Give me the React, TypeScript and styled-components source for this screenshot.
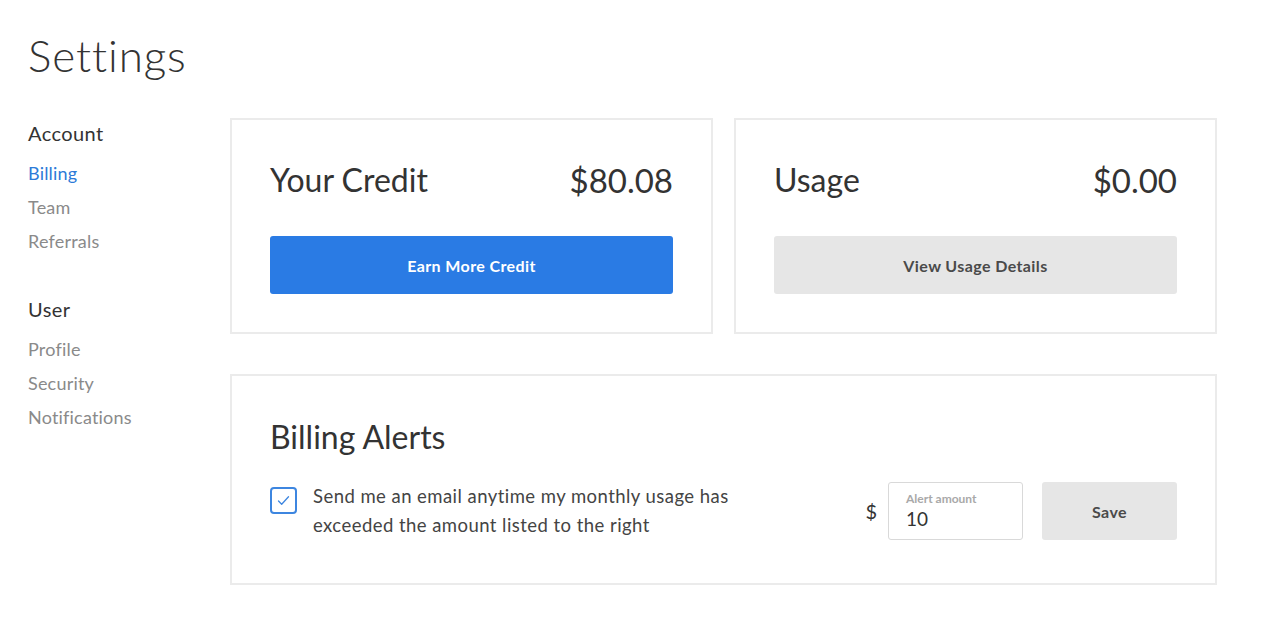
import React, { useState } from 'react';
import styled, { createGlobalStyle } from 'styled-components';

const GlobalStyle = createGlobalStyle`
  body {
    margin: 0;
    background: #fff;
    font-family: Lato, "Open Sans", Arial, sans-serif;
    color: #333;
  }
  * { box-sizing: border-box; }
`;

const Page = styled.div`
  padding: 30px 28px;
`;

const PageTitle = styled.h1`
  margin: 0 0 38px;
  font-size: 44px;
  line-height: 50px;
  font-weight: 300;
  letter-spacing: 0.9px;
  color: #333;
`;

const Layout = styled.div`
  display: grid;
  grid-template-columns: 202px 987px;
`;

const Sidebar = styled.nav`
  display: flex;
  flex-direction: column;
`;

const NavGroup = styled.div`
  display: flex;
  flex-direction: column;
  margin-bottom: 36px;
`;

const NavHeading = styled.div`
  font-size: 20px;
  line-height: 30px;
  letter-spacing: 0.4px;
  color: #333;
  margin-bottom: 8px;
`;

const NavItem = styled.a<{ $active?: boolean }>`
  font-size: 18px;
  line-height: 34px;
  letter-spacing: 0.2px;
  color: ${({ $active }) => ($active ? '#2d7bd8' : '#8a8a8a')};
  text-decoration: none;
  cursor: pointer;
`;

const Main = styled.main`
  display: flex;
  flex-direction: column;
  gap: 40px;
`;

const CardRow = styled.div`
  display: grid;
  grid-template-columns: 1fr 1fr;
  gap: 21px;
`;

const Card = styled.section<{ $top?: number; $bottom?: number }>`
  border: 2px solid #ebebeb;
  padding: ${({ $top }) => $top ?? 40}px 38px ${({ $bottom }) => $bottom ?? 38}px;
`;

const CardHeader = styled.div`
  display: flex;
  justify-content: space-between;
  align-items: center;
  margin-bottom: 36px;
`;

const CardTitle = styled.h2`
  margin: 0;
  font-size: 32px;
  line-height: 40px;
  font-weight: 400;
  color: #333;
`;

const Amount = styled.span`
  font-size: 33px;
  line-height: 40px;
  color: #333;
`;

const Button = styled.button<{ $variant?: 'primary' | 'muted'; $width?: number }>`
  display: block;
  width: ${({ $width }) => ($width ? `${$width}px` : '100%')};
  height: 58px;
  border: none;
  border-radius: 3px;
  font-family: inherit;
  font-size: 16px;
  font-weight: 700;
  letter-spacing: 0.4px;
  cursor: pointer;
  background: ${({ $variant }) => ($variant === 'primary' ? '#2a7be4' : '#e6e6e6')};
  color: ${({ $variant }) => ($variant === 'primary' ? '#fff' : '#4a4a4a')};
`;

const AlertTitle = styled(CardTitle)`
  margin-bottom: 25px;
`;

const AlertRow = styled.div`
  display: flex;
  align-items: center;
  justify-content: space-between;
`;

const CheckLabel = styled.label`
  display: flex;
  align-items: flex-start;
  gap: 16px;
  cursor: pointer;
`;

const CheckBox = styled.span<{ $checked: boolean }>`
  flex: none;
  width: 27px;
  height: 27px;
  margin-top: 5px;
  border: 2px solid #3d86e0;
  border-radius: 4px;
  display: flex;
  align-items: center;
  justify-content: center;
  color: #3d86e0;
  background: #fff;
  svg { opacity: ${({ $checked }) => ($checked ? 1 : 0)}; }
`;

const CheckText = styled.span`
  font-size: 18.5px;
  line-height: 29px;
  letter-spacing: 0.45px;
  color: #444;
  max-width: 440px;
`;

const AmountGroup = styled.div`
  display: flex;
  align-items: center;
`;

const Currency = styled.span`
  font-size: 20px;
  color: #333;
  margin-right: 11px;
`;

const Field = styled.div`
  width: 135px;
  height: 58px;
  border: 1px solid #d9d9d9;
  border-radius: 3px;
  padding: 8px 17px 0;
  margin-right: 19px;
  display: flex;
  flex-direction: column;
`;

const FieldLabel = styled.span`
  font-size: 12px;
  line-height: 15px;
  font-weight: 700;
  color: #a9a9a9;
`;

const FieldInput = styled.input`
  border: none;
  outline: none;
  padding: 0;
  width: 100%;
  font-family: inherit;
  font-size: 19px;
  line-height: 26px;
  color: #333;
  background: transparent;
`;

export default function App() {
  const [checked, setChecked] = useState(true);
  const [amount, setAmount] = useState('10');

  return (
    <>
      <GlobalStyle />
      <Page>
        <PageTitle>Settings</PageTitle>
        <Layout>
          <Sidebar>
            <NavGroup>
              <NavHeading>Account</NavHeading>
              <NavItem $active>Billing</NavItem>
              <NavItem>Team</NavItem>
              <NavItem>Referrals</NavItem>
            </NavGroup>
            <NavGroup>
              <NavHeading>User</NavHeading>
              <NavItem>Profile</NavItem>
              <NavItem>Security</NavItem>
              <NavItem>Notifications</NavItem>
            </NavGroup>
          </Sidebar>

          <Main>
            <CardRow>
              <Card>
                <CardHeader>
                  <CardTitle>Your Credit</CardTitle>
                  <Amount>$80.08</Amount>
                </CardHeader>
                <Button $variant="primary">Earn More Credit</Button>
              </Card>
              <Card>
                <CardHeader>
                  <CardTitle>Usage</CardTitle>
                  <Amount>$0.00</Amount>
                </CardHeader>
                <Button $variant="muted">View Usage Details</Button>
              </Card>
            </CardRow>

            <Card $top={41} $bottom={43}>
              <AlertTitle>Billing Alerts</AlertTitle>
              <AlertRow>
                <CheckLabel onClick={() => setChecked(!checked)}>
                  <CheckBox $checked={checked}>
                    <svg width="15" height="15" viewBox="0 0 15 15" fill="none">
                      <path d="M2.5 8l3.2 3.2 6.8-7.4" stroke="currentColor" strokeWidth="1.3" strokeLinecap="round" strokeLinejoin="round" />
                    </svg>
                  </CheckBox>
                  <CheckText>Send me an email anytime my monthly usage has exceeded the amount listed to the right</CheckText>
                </CheckLabel>
                <AmountGroup>
                  <Currency>$</Currency>
                  <Field>
                    <FieldLabel>Alert amount</FieldLabel>
                    <FieldInput value={amount} onChange={(e) => setAmount(e.target.value)} />
                  </Field>
                  <Button $variant="muted" $width={135}>Save</Button>
                </AmountGroup>
              </AlertRow>
            </Card>
          </Main>
        </Layout>
      </Page>
    </>
  );
}
